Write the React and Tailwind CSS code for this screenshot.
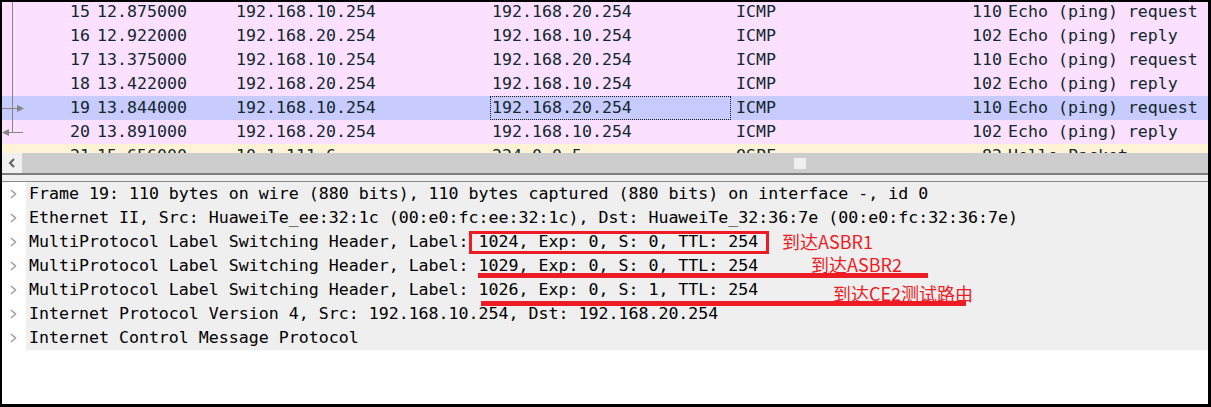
const mono = { fontFamily: '"DejaVu Sans Mono", "Liberation Mono", monospace' };

const packets = [
  { no: 15, time: "12.875000", src: "192.168.10.254", dst: "192.168.20.254", proto: "ICMP", len: 110, info: "Echo (ping) request", kind: "icmp" },
  { no: 16, time: "12.922000", src: "192.168.20.254", dst: "192.168.10.254", proto: "ICMP", len: 102, info: "Echo (ping) reply", kind: "icmp" },
  { no: 17, time: "13.375000", src: "192.168.10.254", dst: "192.168.20.254", proto: "ICMP", len: 110, info: "Echo (ping) request", kind: "icmp" },
  { no: 18, time: "13.422000", src: "192.168.20.254", dst: "192.168.10.254", proto: "ICMP", len: 102, info: "Echo (ping) reply", kind: "icmp" },
  { no: 19, time: "13.844000", src: "192.168.10.254", dst: "192.168.20.254", proto: "ICMP", len: 110, info: "Echo (ping) request", kind: "selected" },
  { no: 20, time: "13.891000", src: "192.168.20.254", dst: "192.168.10.254", proto: "ICMP", len: 102, info: "Echo (ping) reply", kind: "icmp" },
  { no: 21, time: "15.656000", src: "10.1.111.6", dst: "224.0.0.5", proto: "OSPF", len: 82, info: "Hello Packet", kind: "ospf" },
];

const details = [
  "Frame 19: 110 bytes on wire (880 bits), 110 bytes captured (880 bits) on interface -, id 0",
  "Ethernet II, Src: HuaweiTe_ee:32:1c (00:e0:fc:ee:32:1c), Dst: HuaweiTe_32:36:7e (00:e0:fc:32:36:7e)",
  "MultiProtocol Label Switching Header, Label: 1024, Exp: 0, S: 0, TTL: 254",
  "MultiProtocol Label Switching Header, Label: 1029, Exp: 0, S: 0, TTL: 254",
  "MultiProtocol Label Switching Header, Label: 1026, Exp: 0, S: 1, TTL: 254",
  "Internet Protocol Version 4, Src: 192.168.10.254, Dst: 192.168.20.254",
  "Internet Control Message Protocol",
];

const rowBg = {
  icmp: "bg-[#fce0ff]",
  selected: "bg-[#c7cbfe]",
  ospf: "bg-[#fff3d6]",
};

function PacketRow({ p }) {
  const selected = p.kind === "selected";
  return (
    <div className={`flex h-[24px] whitespace-pre text-[16.6px] leading-[24px] text-[#12272e] ${rowBg[p.kind]}`}>
      <div className="w-[91px] shrink-0 pr-[3px] text-right">{p.no}</div>
      <div className="w-[139px] shrink-0 pl-[4px]">{p.time}</div>
      <div className="w-[258px] shrink-0 pl-[4px]">{p.src}</div>
      <div className={`w-[241px] shrink-0 border border-dotted pl-[1px] leading-[22px] ${selected ? "border-[#1a1a1a]" : "border-transparent"}`}>{p.dst}</div>
      <div className="w-[161px] shrink-0 pl-[5px]">{p.proto}</div>
      <div className="w-[113px] shrink-0 pr-[3px] text-right">{p.len}</div>
      <div className="pl-[3px]">{p.info}</div>
    </div>
  );
}

function Chevron() {
  return (
    <svg width="7" height="10" viewBox="0 0 7 10" className="ml-[8px]">
      <polyline points="1,1 5.5,5 1,9" fill="none" stroke="#a2a2a2" strokeWidth="1.6" />
    </svg>
  );
}

export default function App() {
  return (
    <div className="flex h-[407px] w-[1211px] flex-col overflow-hidden border-t-2 border-r-[3px] border-b-[3px] border-l-2 border-black bg-white" style={mono}>
      <div className="relative h-[151px] shrink-0 overflow-hidden">
        <div className="-mt-[2px]">
          {packets.map((p) => (
            <PacketRow key={p.no} p={p} />
          ))}
        </div>
        <svg className="absolute top-0 left-0" width="26" height="140" viewBox="0 0 26 140">
          <line x1="10.5" y1="0" x2="10.5" y2="130.5" stroke="#858585" strokeWidth="1" />
          <line x1="0" y1="106.5" x2="16" y2="106.5" stroke="#858585" strokeWidth="1" />
          <polygon points="15,103 22,106.5 15,110" fill="#858585" />
          <line x1="6" y1="130.5" x2="21" y2="130.5" stroke="#858585" strokeWidth="1" />
          <polygon points="0,130.5 7,127 7,134" fill="#858585" />
        </svg>
      </div>

      <div className="relative flex h-[20px] shrink-0 bg-[#cdcdcd]">
        <div className="flex w-[20px] items-center justify-center bg-[#f0f0f0]">
          <svg width="8" height="10" viewBox="0 0 8 10">
            <polyline points="6,1 2,5 6,9" fill="none" stroke="#5f5f5f" strokeWidth="2" />
          </svg>
        </div>
        <div className="absolute top-[5px] left-[792px] h-[11px] w-[12px] bg-[#f0f0f0]" />
      </div>

      <div className="h-[2px] shrink-0 bg-[#7d7d7d]" />
      <div className="h-[6px] shrink-0 bg-[#f0f0f0]" />
      <div className="h-[1px] shrink-0 bg-[#8a8a8a]" />

      <div className="relative">
        {details.map((d) => (
          <div key={d} className="flex h-[24px] items-center">
            <div className="flex w-[24px] shrink-0 items-center">
              <Chevron />
            </div>
            <div className="h-full flex-1 whitespace-pre bg-[#efefef] pl-[3px] text-[16.6px] leading-[24px] text-black">{d}</div>
          </div>
        ))}

        <div className="absolute top-[49px] left-[467px] h-[23px] w-[300px] border-[3px] border-[#ed1c24]" />
        <div className="absolute top-[91px] left-[476px] h-[5px] w-[450px] bg-[#ed1c24]" />
        <div className="absolute top-[119px] left-[479px] h-[5px] w-[485px] bg-[#ed1c24]" />

        <div className="absolute top-[47px] left-[780px] text-[18px] leading-[24px] whitespace-nowrap text-[#ed1c24]" style={{ fontFamily: '"Noto Sans CJK SC", "Noto Sans", sans-serif' }}>到达ASBR1</div>
        <div className="absolute top-[70px] left-[809px] text-[18px] leading-[24px] whitespace-nowrap text-[#ed1c24]" style={{ fontFamily: '"Noto Sans CJK SC", "Noto Sans", sans-serif' }}>到达ASBR2</div>
        <div className="absolute top-[99px] left-[831px] text-[18px] leading-[24px] whitespace-nowrap text-[#ed1c24]" style={{ fontFamily: '"Noto Sans CJK SC", "Noto Sans", sans-serif' }}>到达CE2测试路由</div>
      </div>
    </div>
  );
}
